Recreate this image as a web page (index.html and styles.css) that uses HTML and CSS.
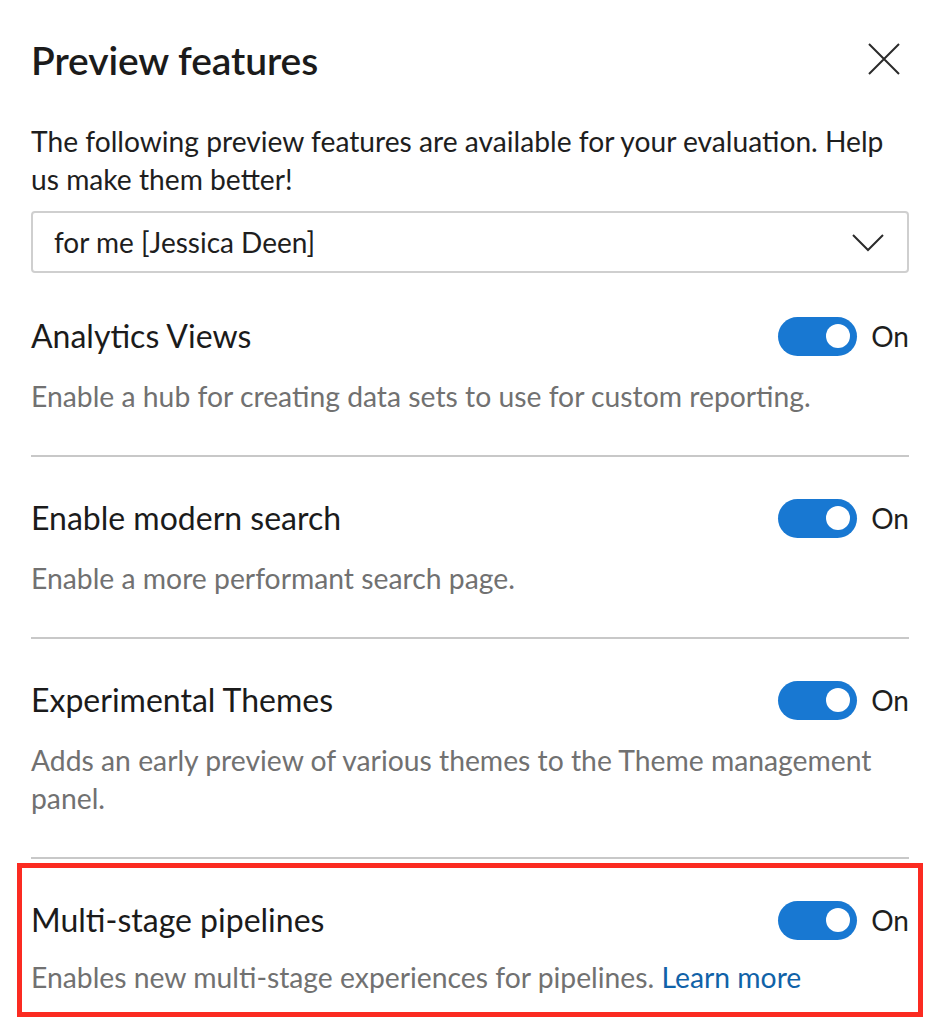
FILE: index.html
```html
<!DOCTYPE html>
<html lang="en">
<head>
<meta charset="utf-8">
<title>Preview features</title>
<link rel="stylesheet" href="styles.css">
</head>
<body>
<div class="panel">
  <header class="panel-header">
    <h1 class="panel-title">Preview features</h1>
    <button class="close-btn" aria-label="Close">
      <svg width="32" height="32" viewBox="0 0 32 32"><path d="M1 1 L31 31 M31 1 L1 31" stroke="#2b2b2b" stroke-width="2" fill="none"/></svg>
    </button>
  </header>
  <p class="intro">The following preview features are available for your evaluation. Help us make them better!</p>
  <div class="dropdown">
    <span class="dropdown-text">for me [Jessica Deen]</span>
    <svg class="chevron" width="32" height="18" viewBox="0 0 32 18"><path d="M1 1 L16 16 L31 1" stroke="#2b2b2b" stroke-width="2" fill="none"/></svg>
  </div>

  <section class="feature">
    <div class="feature-row">
      <h2 class="feature-name">Analytics Views</h2>
      <div class="toggle-wrap"><span class="toggle"><span class="knob"></span></span><span class="toggle-label">On</span></div>
    </div>
    <p class="feature-desc">Enable a hub for creating data sets to use for custom reporting.</p>
  </section>

  <section class="feature">
    <div class="feature-row">
      <h2 class="feature-name">Enable modern search</h2>
      <div class="toggle-wrap"><span class="toggle"><span class="knob"></span></span><span class="toggle-label">On</span></div>
    </div>
    <p class="feature-desc">Enable a more performant search page.</p>
  </section>

  <section class="feature">
    <div class="feature-row">
      <h2 class="feature-name">Experimental Themes</h2>
      <div class="toggle-wrap"><span class="toggle"><span class="knob"></span></span><span class="toggle-label">On</span></div>
    </div>
    <p class="feature-desc">Adds an early preview of various themes to the Theme management panel.</p>
  </section>

  <section class="feature feature-highlight">
    <div class="feature-row">
      <h2 class="feature-name">Multi-stage pipelines</h2>
      <div class="toggle-wrap"><span class="toggle"><span class="knob"></span></span><span class="toggle-label">On</span></div>
    </div>
    <p class="feature-desc">Enables new multi-stage experiences for pipelines. <a class="link" href="#">Learn more</a></p>
  </section>
</div>
</body>
</html>
```
FILE: styles.css
```css
html, body {
  margin: 0;
  padding: 0;
  background: #ffffff;
}
body {
  font-family: "Lato", "Open Sans", sans-serif;
  color: #1e1e1e;
}
.panel {
  padding: 34px 31px 0 31px;
  display: flex;
  flex-direction: column;
}
.panel-header {
  display: flex;
  justify-content: space-between;
  align-items: flex-start;
  height: 52px;
}
.panel-title {
  margin: 0;
  font-size: 39px;
  line-height: 52px;
  font-weight: 600;
  color: #1b1b1b;
  letter-spacing: -0.1px;
}
.close-btn {
  margin: 9px 9px 0 0;
  padding: 0;
  border: 0;
  background: none;
  width: 32px;
  height: 32px;
  display: block;
}
.close-btn svg { display: block; }
.intro {
  margin: 36px 0 0 0;
  font-size: 28.2px;
  line-height: 38px;
  color: #1e1e1e;
}
.dropdown {
  margin-top: 13px;
  height: 62px;
  box-sizing: border-box;
  border: 2px solid #cfcfcf;
  border-radius: 4px;
  display: flex;
  align-items: center;
  justify-content: space-between;
  padding: 0 23px 0 21px;
}
.dropdown-text {
  font-size: 28px;
  line-height: 38px;
  color: #1e1e1e;
}
.chevron { display: block; margin-top: 2px; }
.feature {
  padding: 42px 0 40px 0;
  border-bottom: 2px solid #c8c8c8;
}
.feature + .feature { padding-top: 40px; }
.feature-row {
  display: flex;
  justify-content: space-between;
  align-items: center;
  height: 42px;
}
.feature-name {
  margin: 0;
  font-size: 32px;
  line-height: 42px;
  font-weight: 400;
  color: #1b1b1b;
}
.toggle-wrap {
  display: flex;
  align-items: center;
  gap: 14px;
}
.toggle {
  width: 79px;
  height: 39px;
  border-radius: 20px;
  background: #1878d2;
  display: flex;
  align-items: center;
  justify-content: flex-end;
  padding-right: 7px;
  box-sizing: border-box;
}
.knob {
  width: 24px;
  height: 24px;
  border-radius: 50%;
  background: #ffffff;
}
.toggle-label {
  font-size: 28px;
  line-height: 38px;
  color: #1e1e1e;
}
.feature-desc {
  margin: 20px 0 0 0;
  font-size: 28.3px;
  line-height: 38px;
  color: #717171;
}
.feature-highlight {
  border: 5px solid #fb2b21;
  margin: 4px -14px 0 -14px;
  padding: 31px 9px 16px 9px;
}
.feature + .feature-highlight { padding-top: 31px; }
.feature-highlight .feature-desc { margin-top: 17px; }
.link {
  color: #1062a8;
  text-decoration: none;
}
```
